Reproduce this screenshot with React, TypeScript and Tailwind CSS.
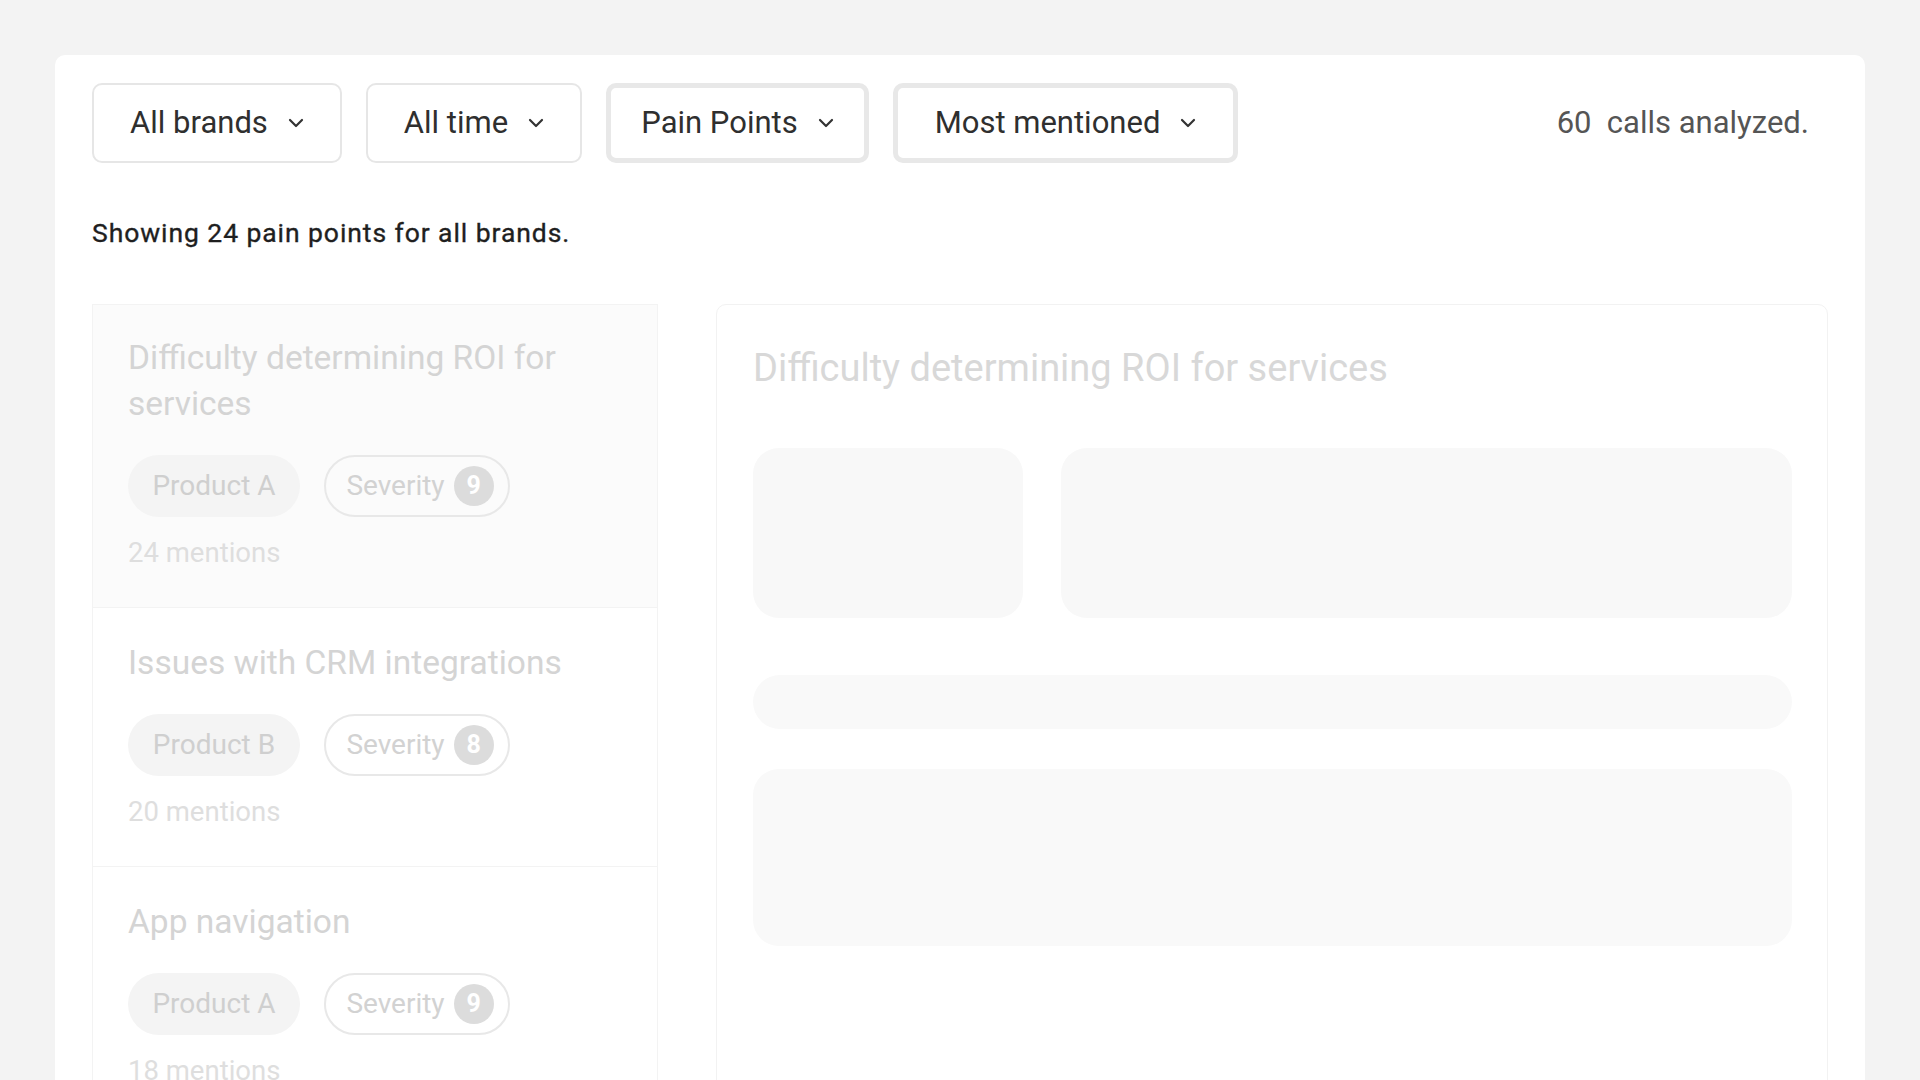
import React from "react";

const Chevron = () => (
  <svg width="16" height="10" viewBox="0 0 16 10" fill="none" className="shrink-0">
    <path d="M2 2L8 8L14 2" stroke="#333333" strokeWidth="2.2" strokeLinecap="round" strokeLinejoin="round" />
  </svg>
);

type BtnProps = { label: string; w: string; thick?: boolean };

const FilterButton = ({ label, w, thick }: BtnProps) => (
  <button
    className={
      thick
        ? `flex h-[80px] items-center justify-center gap-[20px] rounded-[10px] border-[5px] border-[#e8e8e8] bg-white text-[31px] text-[#2f2f2f] ${w}`
        : `flex h-[80px] items-center justify-center gap-[20px] rounded-[10px] border-2 border-[#e6e6e6] bg-white text-[31px] text-[#2f2f2f] ${w}`
    }
  >
    <span>{label}</span>
    <Chevron />
  </button>
);

type Item = { title: string; product: string; severity: number; mentions: number; selected?: boolean };

const items: Item[] = [
  { title: "Difficulty determining ROI for services", product: "Product A", severity: 9, mentions: 24, selected: true },
  { title: "Issues with CRM integrations", product: "Product B", severity: 8, mentions: 20 },
  { title: "App navigation", product: "Product A", severity: 9, mentions: 18 },
];

const ListCard = ({ item }: { item: Item }) => (
  <div
    className={
      item.selected
        ? "border border-[#f3f3f3] bg-[#fbfbfb] px-[35px] pb-[36px] pt-[30px]"
        : "border border-t-0 border-[#f3f3f3] bg-white px-[35px] pb-[36px] pt-[32px]"
    }
  >
    <div className="w-[480px] text-[33.5px] leading-[46px] text-[#d4d4d4]">{item.title}</div>
    <div className="mt-[28px] flex items-center gap-[24px]">
      <div className="flex h-[62px] w-[172px] items-center justify-center rounded-full bg-[#f4f4f4] text-[28px] text-[#cfcfcf]">
        {item.product}
      </div>
      <div className="flex h-[62px] w-[186px] items-center justify-center gap-[9px] rounded-full border-2 border-[#e8e8e8] pl-[6px] text-[28px] text-[#d2d2d2]">
        <span>Severity</span>
        <span className="flex h-[40px] w-[40px] items-center justify-center rounded-full bg-[#dcdcdc] text-[25px] font-bold text-white">
          {item.severity}
        </span>
      </div>
    </div>
    <div className="mt-[18px] text-[27.5px] leading-[36px] text-[#dedede]">{item.mentions} mentions</div>
  </div>
);

export default function App() {
  return (
    <div
      className="h-screen w-full overflow-hidden bg-[#f3f3f3] pl-[55px] pr-[55px] pt-[55px]"
      style={{ fontFamily: "Roboto, 'Open Sans', sans-serif" }}
    >
      <div className="h-[1100px] rounded-t-[10px] bg-white px-[37px] pt-[28px]">
        <div className="flex items-center">
          <div className="flex gap-[24px]">
            <FilterButton label="All brands" w="w-[250px]" />
            <FilterButton label="All time" w="w-[216px]" />
            <FilterButton label="Pain Points" w="w-[263px]" thick />
            <FilterButton label="Most mentioned" w="w-[345px]" thick />
          </div>
          <div className="ml-auto whitespace-pre pr-[19px] text-[31px] text-[#555555]">60  calls analyzed.</div>
        </div>

        <div className="mt-[54px] text-[26.5px] font-normal leading-[32px] tracking-[0.035em] text-[#1f1f1f] [-webkit-text-stroke:0.35px_#1f1f1f]">
          Showing 24 pain points for all brands.
        </div>

        <div className="mt-[55px] flex gap-[58px]">
          <div className="flex w-[566px] shrink-0 flex-col">
            {items.map((it) => (
              <ListCard key={it.title} item={it} />
            ))}
          </div>

          <div className="h-[900px] flex-1 rounded-[10px] border border-[#f2f2f2] pl-[36px] pr-[35px] pt-[40px]">
            <div className="text-[38px] leading-[46px] text-[#d8d8d8]">Difficulty determining ROI for services</div>
            <div className="mt-[57px] flex gap-[38px]">
              <div className="h-[170px] w-[270px] rounded-[26px] bg-[#f8f8f8]" />
              <div className="h-[170px] flex-1 rounded-[26px] bg-[#f8f8f8]" />
            </div>
            <div className="mt-[57px] h-[54px] rounded-[27px] bg-[#f9f9f9]" />
            <div className="mt-[40px] h-[177px] rounded-[26px] bg-[#f9f9f9]" />
          </div>
        </div>
      </div>
    </div>
  );
}
